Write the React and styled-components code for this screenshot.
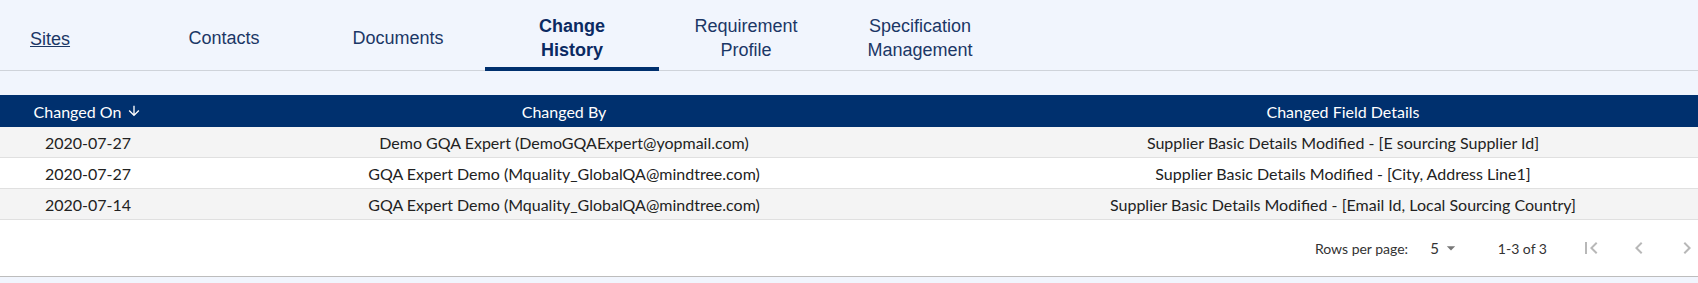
import React from 'react'
import styled, { createGlobalStyle } from 'styled-components'

const GlobalStyle = createGlobalStyle`
  html, body {
    margin: 0;
    padding: 0;
    background: #f1f5fd;
    overflow: hidden;
  }
`

const Page = styled.div`
  width: 1761px;
  background: #f1f5fd;
`

const TabBar = styled.nav`
  display: flex;
  height: 70px;
  border-bottom: 1px solid #cfd3da;
  font-family: 'Liberation Sans', Arial, sans-serif;
`

const SitesLink = styled.a`
  flex: 0 0 137px;
  box-sizing: border-box;
  padding: 8px 0 0 30px;
  display: flex;
  align-items: center;
  font-size: 18px;
  color: #1b3766;
  text-decoration: underline;
`

const Tab = styled.div`
  flex: 0 0 174px;
  box-sizing: border-box;
  display: flex;
  align-items: center;
  justify-content: center;
  text-align: center;
  padding-top: 8px;
  font-size: 18px;
  line-height: 24px;
  font-weight: ${p => (p.$active ? 700 : 400)};
  color: ${p => (p.$active ? '#0b2a62' : '#1b3766')};
  border-bottom: 4px solid ${p => (p.$active ? '#00306e' : 'transparent')};
  margin-bottom: -1px;
  height: 71px;
`

const Gap = styled.div`
  height: 24px;
`

const Table = styled.div`
  font-family: Lato, 'Open Sans', sans-serif;
  font-size: 16px;
  color: #222;
`

const Row = styled.div`
  display: grid;
  grid-template-columns: 176px 776px 782px 1fr;
  height: ${p => (p.$head ? '32px' : '31px')};
  align-items: center;
  background: ${p => (p.$head ? '#00306e' : p.$odd ? '#f4f4f4' : '#ffffff')};
  color: ${p => (p.$head ? '#ffffff' : '#222')};
  border-bottom: ${p => (p.$head ? 'none' : '1px solid #e0e0e0')};
  box-sizing: border-box;
`

const Cell = styled.div`
  text-align: center;
  white-space: nowrap;
  display: flex;
  justify-content: center;
  align-items: center;
  gap: 5px;
`

const Pagination = styled.div`
  display: flex;
  justify-content: flex-end;
  align-items: center;
  height: 56px;
  background: #ffffff;
  border-bottom: 1px solid #bdbdbd;
  padding-right: 2px;
  font-family: Lato, 'Open Sans', sans-serif;
  font-size: 14px;
  color: #333;
`

const RowsLabel = styled.span`
  margin-right: 22px;
`

const Select = styled.div`
  display: flex;
  align-items: center;
  gap: 2px;
  margin-right: 37px;
  font-size: 15px;
`

const Range = styled.span`
  margin-right: 20px;
`

const IconButton = styled.button`
  width: 48px;
  height: 48px;
  border: none;
  background: transparent;
  display: flex;
  align-items: center;
  justify-content: center;
  padding: 0;
  color: #b8b8b8;
`

const Bottom = styled.div`
  height: 8px;
`

const rows = [
  ['2020-07-27', 'Demo GQA Expert (DemoGQAExpert@yopmail.com)', 'Supplier Basic Details Modified - [E sourcing Supplier Id]'],
  ['2020-07-27', 'GQA Expert Demo (Mquality_GlobalQA@mindtree.com)', 'Supplier Basic Details Modified - [City, Address Line1]'],
  ['2020-07-14', 'GQA Expert Demo (Mquality_GlobalQA@mindtree.com)', 'Supplier Basic Details Modified - [Email Id, Local Sourcing Country]'],
]

const Icon = ({ d, size = 24 }) => (
  <svg width={size} height={size} viewBox="0 0 24 24" fill="currentColor">
    <path d={d} />
  </svg>
)

const App = () => (
  <Page>
    <GlobalStyle />
    <TabBar>
      <SitesLink>Sites</SitesLink>
      <Tab>Contacts</Tab>
      <Tab>Documents</Tab>
      <Tab $active>Change<br />History</Tab>
      <Tab>Requirement<br />Profile</Tab>
      <Tab>Specification<br />Management</Tab>
    </TabBar>
    <Gap />
    <Table>
      <Row $head>
        <Cell>
          Changed On
          <svg width="16" height="16" viewBox="0 0 24 24" fill="#fff">
            <path d="M20 12l-1.41-1.41L13 16.17V4h-2v12.17l-5.58-5.59L4 12l8 8 8-8z" />
          </svg>
        </Cell>
        <Cell>Changed By</Cell>
        <Cell>Changed Field Details</Cell>
      </Row>
      {rows.map((r, i) => (
        <Row key={i} $odd={i % 2 === 0}>
          <Cell>{r[0]}</Cell>
          <Cell>{r[1]}</Cell>
          <Cell>{r[2]}</Cell>
        </Row>
      ))}
      <Pagination>
        <RowsLabel>Rows per page:</RowsLabel>
        <Select>
          5
          <svg width="20" height="20" viewBox="0 0 24 24" fill="#777">
            <path d="M7 10l5 5 5-5z" />
          </svg>
        </Select>
        <Range>1-3 of 3</Range>
        <IconButton><Icon d="M18.41 16.59L13.82 12l4.59-4.59L17 6l-6 6 6 6zM6 6h2v12H6z" /></IconButton>
        <IconButton><Icon d="M15.41 7.41L14 6l-6 6 6 6 1.41-1.41L10.83 12z" /></IconButton>
        <IconButton><Icon d="M10 6L8.59 7.41 13.17 12l-4.58 4.59L10 18l6-6z" /></IconButton>
        <IconButton><Icon d="M5.59 7.41L10.18 12l-4.59 4.59L7 18l6-6-6-6zM16 6h2v12h-2z" /></IconButton>
      </Pagination>
    </Table>
    <Bottom />
  </Page>
)

export default App
